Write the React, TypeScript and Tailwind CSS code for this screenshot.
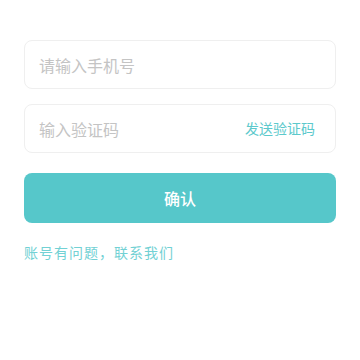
export default function App() {
  const font = { fontFamily: '"Noto Sans CJK SC", "Noto Sans", sans-serif' };
  return (
    <div className="w-[360px] h-[360px] bg-white flex flex-col px-6 pt-10" style={font}>
      <div className="h-[49px] rounded-lg border border-[#efefef] flex items-center pl-[14px] pr-5">
        <span className="text-[16px] text-[#c4c4c4]">请输入手机号</span>
      </div>
      <div className="mt-[15px] h-[49px] rounded-lg border border-[#efefef] flex items-center justify-between pl-[14px] pr-5">
        <span className="text-[16px] text-[#c4c4c4]">输入验证码</span>
        <span className="text-[14px] text-[#5cc9cc]">发送验证码</span>
      </div>
      <button className="mt-5 h-[50px] rounded-lg bg-[#56c7ca] text-white text-[16px] font-medium flex items-center justify-center">
        确认
      </button>
      <div className="mt-[19px] text-[14px] tracking-[1px] text-[#72d1d4]">账号有问题，联系我们</div>
    </div>
  );
}
